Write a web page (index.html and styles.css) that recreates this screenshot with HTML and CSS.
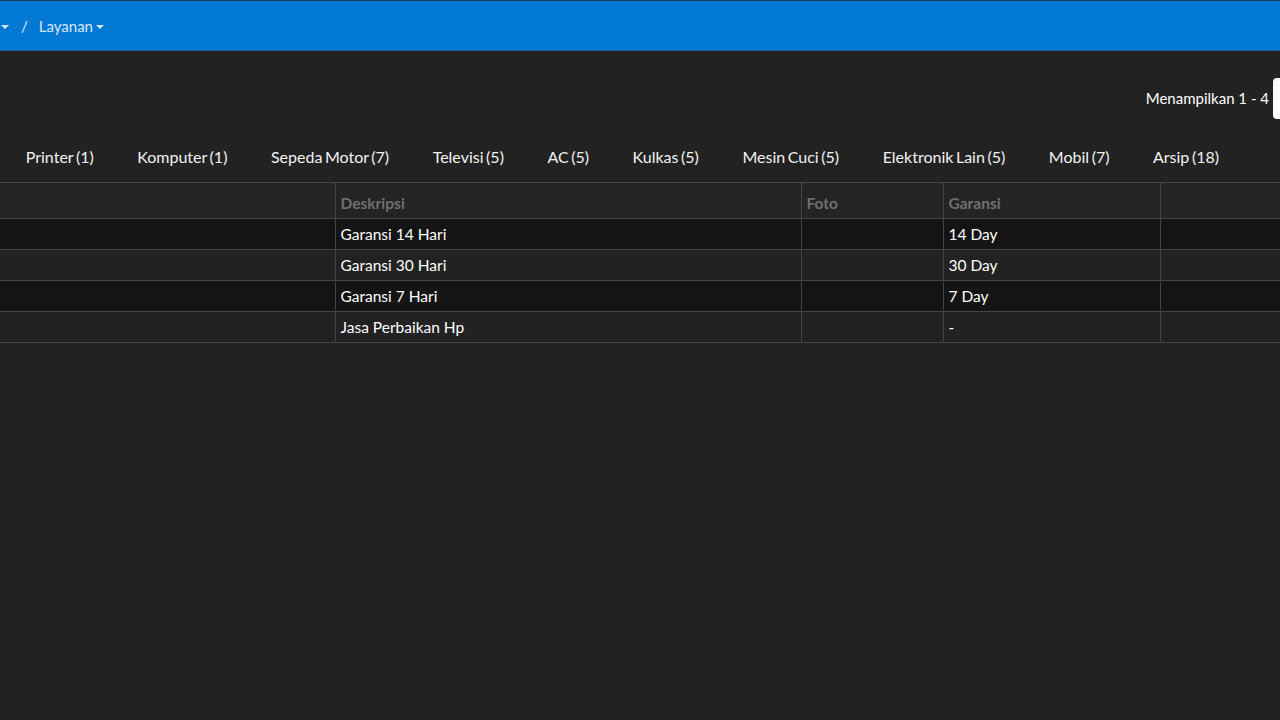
FILE: index.html
```html
<!DOCTYPE html>
<html lang="id">
<head>
<meta charset="utf-8">
<title>Layanan</title>
<link rel="stylesheet" href="styles.css">
</head>
<body>
<header class="topbar">
  <span class="caret"></span>
  <span class="sep">/</span>
  <span class="crumb">Layanan<span class="caret small"></span></span>
</header>
<main class="content">
  <div class="toolbar">
    <span class="count">Menampilkan 1 - 4</span>
    <span class="select-box"></span>
  </div>
  <nav class="tabs">
    <a class="tab">Printer (1)</a>
    <a class="tab">Komputer (1)</a>
    <a class="tab">Sepeda Motor (7)</a>
    <a class="tab">Televisi (5)</a>
    <a class="tab">AC (5)</a>
    <a class="tab">Kulkas (5)</a>
    <a class="tab">Mesin Cuci (5)</a>
    <a class="tab">Elektronik Lain (5)</a>
    <a class="tab">Mobil (7)</a>
    <a class="tab">Arsip (18)</a>
  </nav>
  <table class="grid">
    <colgroup>
      <col class="c-name"><col class="c-desc"><col class="c-foto"><col class="c-gar"><col class="c-rest">
    </colgroup>
    <thead>
      <tr><th></th><th>Deskripsi</th><th>Foto</th><th>Garansi</th><th></th></tr>
    </thead>
    <tbody>
      <tr class="odd"><td></td><td>Garansi 14 Hari</td><td></td><td>14 Day</td><td></td></tr>
      <tr><td></td><td>Garansi 30 Hari</td><td></td><td>30 Day</td><td></td></tr>
      <tr class="odd"><td></td><td>Garansi 7 Hari</td><td></td><td>7 Day</td><td></td></tr>
      <tr><td></td><td>Jasa Perbaikan Hp</td><td></td><td>-</td><td></td></tr>
    </tbody>
  </table>
</main>
</body>
</html>
```

FILE: styles.css
```css
html, body {
  margin: 0;
  padding: 0;
}
body {
  background: #222222;
  color: #ffffff;
  font-family: Lato, "Open Sans", sans-serif;
  font-size: 15px;
  width: 1280px;
  height: 720px;
  overflow: hidden;
}
.topbar {
  height: 49px;
  background: #0078d4;
  border-top: 1px solid #1c3d5c;
  border-bottom: 1px solid #1b5f9e;
  display: flex;
  align-items: center;
  color: #d6e8f8;
  font-size: 15px;
  padding-left: 1px;
  box-sizing: content-box;
}
.caret {
  display: inline-block;
  width: 0;
  height: 0;
  border-left: 4px solid transparent;
  border-right: 4px solid transparent;
  border-top: 4px solid #d6e8f8;
  margin-top: 2px;
}
.caret.small {
  margin-left: 3px;
}
.sep {
  margin-left: 12px;
  margin-right: 11px;
}
.crumb {
  display: inline-flex;
  align-items: center;
}
.content {
  display: flex;
  flex-direction: column;
}
.toolbar {
  display: flex;
  justify-content: flex-end;
  align-items: center;
  height: 42px;
  margin-top: 26px;
  margin-bottom: 13px;
}
.count {
  font-size: 15px;
  margin-right: 4px;
}
.select-box {
  width: 7px;
  height: 41px;
  background: #ffffff;
  border-radius: 4px 0 0 4px;
}
.tabs {
  display: flex;
  height: 48px;
  padding-bottom: 2px;
  align-items: center;
  padding-left: 4px;
}
.tab {
  padding: 0 21.75px;
  font-size: 16px;
  word-spacing: -1.5px;
  color: #f2f2f2;
  white-space: nowrap;
}
.grid {
  border-collapse: collapse;
  table-layout: fixed;
  width: 1300px;
  border-top: 1px solid #464646;
}
.c-name { width: 335px; }
.c-desc { width: 466px; }
.c-foto { width: 142px; }
.c-gar { width: 217px; }
.c-rest { width: 140px; }
.grid th, .grid td {
  border: 1px solid #444444;
  border-top: none;
  text-align: left;
  padding: 0 5px;
  white-space: nowrap;
}
.grid th:first-child, .grid td:first-child {
  border-left: none;
}
.grid th {
  height: 31px;
  padding-top: 4px;
  color: #6f6f6f;
  font-weight: 700;
  font-size: 15.5px;
  background: #242424;
}
.grid td {
  height: 29px;
  padding-bottom: 1px;
  font-size: 15.5px;
  color: #ffffff;
  background: #222222;
}
.grid tr.odd td {
  background: #141414;
}
```
